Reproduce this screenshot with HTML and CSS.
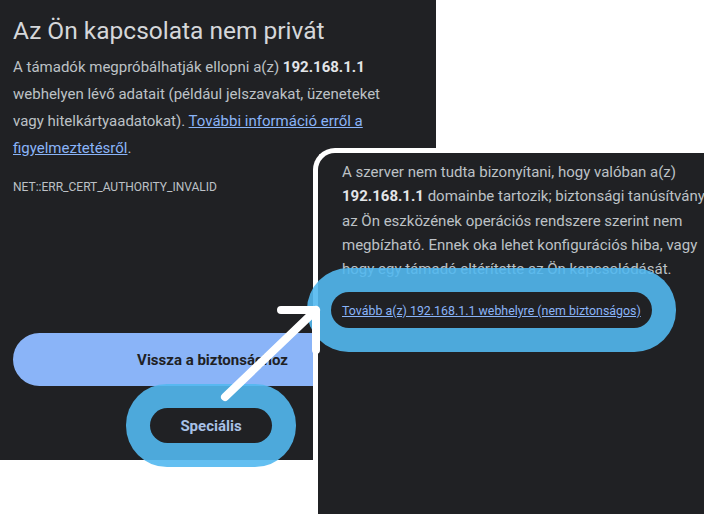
FILE: index.html
```html
<!DOCTYPE html>
<html>
  <head>
    <meta charset="utf-8">
    <title>Az Ön kapcsolata nem privát</title>
    <link rel="stylesheet" href="styles.css">
  </head>
  <body>
    <div class="shot shot-main">
      <h1 class="title">Az Ön kapcsolata nem privát</h1>
      <p class="text">A támadók megpróbálhatják ellopni a(z) <b>192.168.1.1</b><br>webhelyen lévő adatait (például jelszavakat, üzeneteket<br>vagy hitelkártyaadatokat). <a href="#" class="link">További információ erről a<br>figyelmeztetésről</a>.</p>
      <p class="code">NET::ERR_CERT_AUTHORITY_INVALID</p>
      <div class="actions">
        <a href="#" class="btn-back">Vissza a biztonsághoz</a>
        <div class="more">
          <a href="#" class="btn-more mark">Speciális</a>
        </div>
      </div>
    </div>

    <div class="shot shot-detail">
      <p class="text text-detail">A szerver nem tudta bizonyítani, hogy valóban a(z)<br><b>192.168.1.1</b> domainbe tartozik; biztonsági tanúsítványa<br>az Ön eszközének operációs rendszere szerint nem<br>megbízható. Ennek oka lehet konfigurációs hiba, vagy<br>hogy egy támadó eltérítette az Ön kapcsolódását.</p>
      <div class="proceed">
        <a href="#" class="btn-proceed mark"><span class="link">Tovább a(z) 192.168.1.1 webhelyre (nem biztonságos)</span></a>
      </div>
    </div>

    <svg class="arrow" width="704" height="514" viewBox="0 0 704 514">
      <path d="M225 397 L316 310 M281 310 L316 310 L316 350" fill="none" stroke="#fff" stroke-width="8" stroke-linecap="round" stroke-linejoin="round"/>
    </svg>
  </body>
</html>
```

FILE: styles.css
```css
*{margin: 0;padding: 0;box-sizing: border-box;}
html, body {overflow: hidden;}
body {
  position: relative;
  width: 704px;
  height: 514px;
  background: #fff;
  font-family: Roboto, "Liberation Sans", sans-serif;
}

.shot {background: #202124;color: #bdc1c6;}

.shot-main {
  width: 436px;
  height: 460px;
  padding: 15px 0 0 13px;
  display: flex;
  flex-direction: column;
}

.title {
  font-size: 24.5px;
  font-weight: 400;
  line-height: 32px;
  color: #d5d7da;
}

.text {font-size: 15px;line-height: 27px;}
.text b {font-weight: 700;color: #e3e5e8;}
.shot-main .text {margin-top: 7px;}

.link {color: #8ab4f8;text-decoration: underline;}

.code {font-size: 12px;line-height: 18px;margin-top: 16px;}

.actions {margin-top: 137px;width: 399px;}

.btn-back {
  display: flex;
  align-items: center;
  justify-content: center;
  height: 53px;
  border-radius: 27px;
  background: #8ab4f8;
  color: #202124;
  font-size: 15px;
  font-weight: 700;
  text-decoration: none;
}

.more {display: flex;justify-content: center;margin-top: 22px;}

.btn-more {
  display: flex;
  align-items: center;
  justify-content: center;
  width: 122px;
  height: 35px;
  border-radius: 18px;
  background: #202124;
  color: #a8c0e6;
  font-size: 15px;
  font-weight: 700;
  text-decoration: none;
  margin-left: -3px;
}

/* blue marker ring drawn round a button */
.mark {box-shadow: 0 0 0 24px rgba(82, 184, 240, .9);}

.shot-detail {
  position: absolute;
  left: 313px;
  top: 148px;
  right: 0;
  bottom: 0;
  border-top: 5px solid #fff;
  border-left: 5px solid #fff;
  border-top-left-radius: 22px;
  padding: 7px 0 0 24px;
}

.text-detail {line-height: 24.3px;white-space: nowrap;}

.proceed {display: flex;margin: 11px 0 0 -11px;}

.btn-proceed {
  display: flex;
  align-items: center;
  height: 36px;
  padding: 0 11px;
  border-radius: 18px;
  background: #202124;
  font-size: 12.4px;
  text-decoration: none;
  position: relative;
  z-index: 1;
}

.arrow {position: absolute;left: 0;top: 0;z-index: 2;pointer-events: none;}
```
